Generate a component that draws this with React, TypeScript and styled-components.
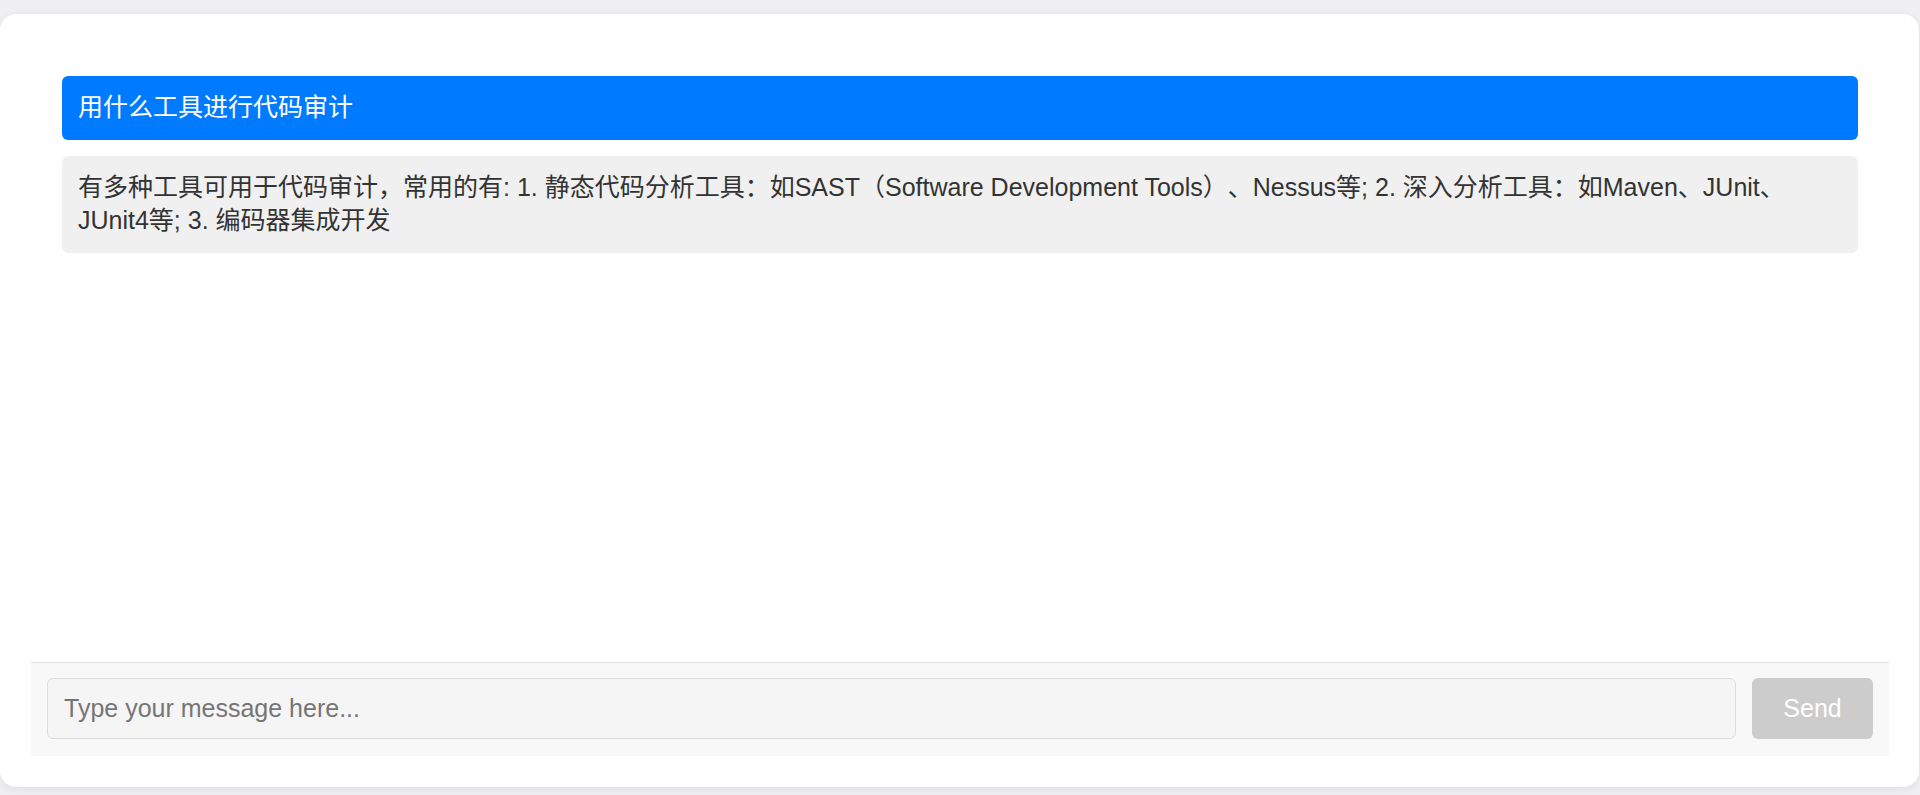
import React from "react";
import styled, { createGlobalStyle } from "styled-components";

const GlobalStyle = createGlobalStyle`
  html, body {
    margin: 0;
    padding: 0;
    background: #efeff4;
    font-family: "Liberation Sans", Arial, "Noto Sans CJK SC", sans-serif;
  }
  * { box-sizing: border-box; }
`;

const Page = styled.div`
  padding-top: 14px;
  height: 795px;
`;

const Card = styled.div`
  width: 1919px;
  height: 773px;
  background: #ffffff;
  border-radius: 16px;
  box-shadow: 0 2px 10px rgba(0, 0, 0, 0.08);
  padding: 30px 30px 31px 31px;
  display: flex;
  flex-direction: column;
`;

const Messages = styled.div`
  flex: 1;
  padding: 32px 31px;
  display: flex;
  flex-direction: column;
  gap: 16px;
  overflow: hidden;
`;

const Bubble = styled.div<{ $user?: boolean }>`
  padding: 15px 16px;
  border-radius: 6px;
  font-size: 25px;
  line-height: 33.5px;
  text-spacing-trim: space-all;
  background: ${(p) => (p.$user ? "#007bff" : "#f0f0f0")};
  color: ${(p) => (p.$user ? "#ffffff" : "#333333")};
  font-family: "Liberation Sans", Arial, "Noto Sans CJK SC", sans-serif;
`;

const InputBar = styled.div`
  border-top: 1px solid #dddddd;
  background: #f8f8f8;
  padding: 15px 16px 17px 16px;
  display: flex;
  gap: 16px;
`;

const TextInput = styled.input`
  flex: 1;
  height: 61px;
  padding: 0 16px;
  border: 1px solid #dddddd;
  border-radius: 6px;
  background: #f5f5f5;
  font-size: 25px;
  font-family: "Liberation Sans", Arial, sans-serif;
  color: #333;
  outline: none;
  &::placeholder {
    color: #757575;
  }
`;

const SendButton = styled.button`
  width: 121px;
  height: 61px;
  border: none;
  border-radius: 6px;
  background: #cccccc;
  color: #ffffff;
  font-size: 25px;
  font-family: "Liberation Sans", Arial, sans-serif;
  cursor: not-allowed;
`;

export default function App() {
  return (
    <>
      <GlobalStyle />
      <Page>
        <Card>
          <Messages>
            <Bubble $user>用什么工具进行代码审计</Bubble>
            <Bubble>
              有多种工具可用于代码审计，常用的有: 1. 静态代码分析工具：如SAST（Software Development Tools）、Nessus等; 2. 深入分析工具：如Maven、JUnit、JUnit4等; 3. 编码器集成开发
            </Bubble>
          </Messages>
          <InputBar>
            <TextInput placeholder="Type your message here..." />
            <SendButton disabled>Send</SendButton>
          </InputBar>
        </Card>
      </Page>
    </>
  );
}
